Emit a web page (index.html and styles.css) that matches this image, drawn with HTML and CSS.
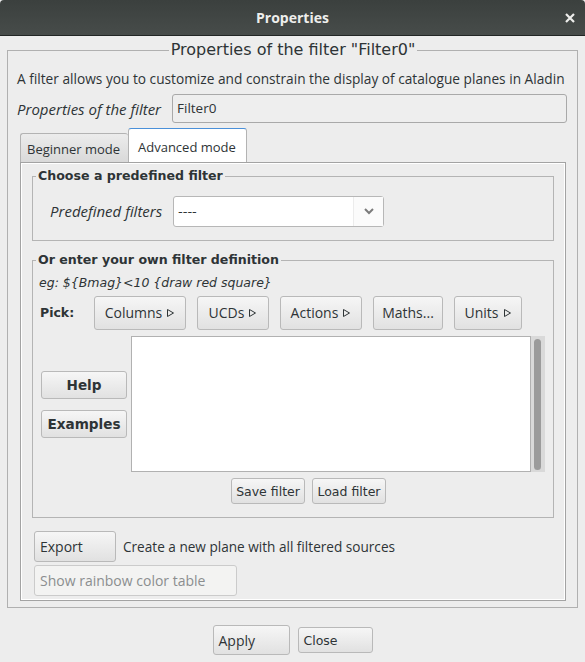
FILE: index.html
```html
<!DOCTYPE html>
<html>
<head>
<meta charset="utf-8">
<link rel="stylesheet" href="styles.css">
</head>
<body>
<div class="titlebar">
  <span class="title">Properties</span>
  <svg class="close-x" width="10" height="10" viewBox="0 0 10 10"><path d="M1 1 L9 9 M9 1 L1 9" stroke="#eeeeec" stroke-width="2.2"/></svg>
</div>
<fieldset class="outer">
  <legend class="outer-legend">Properties of the filter "Filter0"</legend>
  <div class="desc">A filter allows you to customize and constrain the display of catalogue planes in Aladin</div>
  <div class="name-row">
    <span class="ilabel name-label">Properties of the filter</span>
    <div class="textfield">Filter0</div>
  </div>
  <div class="tabs">
    <div class="tab tab-beginner">Beginner mode</div>
    <div class="tab tab-active">Advanced mode</div>
  </div>
  <div class="panel">
    <fieldset class="group group-predef">
      <legend class="group-legend">Choose a predefined filter</legend>
      <div class="predef-row">
        <span class="ilabel predef-label">Predefined filters</span>
        <div class="combo">
          <span class="combo-text">----</span>
          <span class="combo-arrow">
            <svg width="12" height="8" viewBox="0 0 12 8"><path d="M2 2 L6 6 L10 2" fill="none" stroke="#7b7b7b" stroke-width="2"/></svg>
          </span>
        </div>
      </div>
    </fieldset>
    <fieldset class="group group-own">
      <legend class="group-legend">Or enter your own filter definition</legend>
      <div class="eg">eg: ${Bmag}&lt;10 {draw red square}</div>
      <div class="pick-row">
        <span class="pick-label">Pick:</span>
        <button class="btn pick w-columns">Columns <svg class="tri" width="9" height="10" viewBox="0 0 9 10"><path d="M1.5 1.5 L7.5 5 L1.5 8.5 Z" fill="none" stroke="#2e3436" stroke-width="1"/></svg></button>
        <button class="btn pick w-ucds">UCDs <svg class="tri" width="9" height="10" viewBox="0 0 9 10"><path d="M1.5 1.5 L7.5 5 L1.5 8.5 Z" fill="none" stroke="#2e3436" stroke-width="1"/></svg></button>
        <button class="btn pick w-actions">Actions <svg class="tri" width="9" height="10" viewBox="0 0 9 10"><path d="M1.5 1.5 L7.5 5 L1.5 8.5 Z" fill="none" stroke="#2e3436" stroke-width="1"/></svg></button>
        <button class="btn pick w-maths">Maths...</button>
        <button class="btn pick w-units">Units <svg class="tri" width="9" height="10" viewBox="0 0 9 10"><path d="M1.5 1.5 L7.5 5 L1.5 8.5 Z" fill="none" stroke="#2e3436" stroke-width="1"/></svg></button>
      </div>
      <div class="editor-row">
        <div class="side-buttons">
          <button class="btn bold-btn">Help</button>
          <button class="btn bold-btn">Examples</button>
        </div>
        <div class="editor">
          <div class="editor-area"></div>
          <div class="scrollbar"><div class="thumb"></div></div>
        </div>
      </div>
      <div class="file-row">
        <button class="btn small-btn w-save">Save filter</button>
        <button class="btn small-btn w-load">Load filter</button>
      </div>
    </fieldset>
    <div class="export-row">
      <button class="btn plain-btn w-export">Export</button>
      <span class="export-text">Create a new plane with all filtered sources</span>
    </div>
    <button class="btn disabled-btn">Show rainbow color table</button>
  </div>
</fieldset>
<div class="bottom-row">
  <button class="btn plain-btn w-apply">Apply</button>
  <button class="btn small-btn w-close">Close</button>
</div>
</body>
</html>
```
FILE: styles.css
```css
* { box-sizing: border-box; }
html, body { margin: 0; padding: 0; }
body {
  width: 585px;
  height: 662px;
  background: #ededed;
  color: #2e3436;
  font-family: "Open Sans", "DejaVu Sans", sans-serif;
  font-size: 13px;
  overflow: hidden;
}
.titlebar {
  height: 36px;
  background: linear-gradient(#3b403e, #474c4a);
  border-bottom: 1px solid #222625;
  border-radius: 4px 4px 0 0;
  display: flex;
  align-items: center;
  justify-content: center;
  position: relative;
}
.title {
  color: #eeeeec;
  font-weight: bold;
  font-size: 14px;
  font-family: "Open Sans", sans-serif;
}
.close-x {
  position: absolute;
  right: 10px;
  top: 13px;
}
fieldset { margin: 0; min-width: 0; }
.outer {
  margin: 5px 7px 0;
  border: 1px solid #b0b0b0;
  padding: 0 11px 6px 12px;
}
.outer-legend {
  margin: 0 auto;
  padding: 0 2px;
  font-family: "DejaVu Sans", sans-serif;
  font-size: 16px;
  line-height: 18px;
  height: 18px;
}
.desc {
  margin: 10px 0 0 -3px;
  height: 20px;
  line-height: 20px;
  white-space: nowrap;
  font-size: 13.7px;
}
.name-row {
  margin: 5px 0 0 -3px;
  display: flex;
  align-items: center;
  height: 29px;
}
.ilabel { font-style: italic; font-size: 15px; }
.name-label { width: 155px; }
.textfield {
  flex: 1;
  height: 29px;
  border: 1px solid #a9a9a9;
  border-radius: 3px;
  background: #eeeeee;
  padding-left: 4px;
  line-height: 27px;
  margin-right: -1px;
  font-size: 13.5px;
}
.tabs {
  margin-top: 5px;
  height: 34px;
  display: flex;
  align-items: flex-end;
}
.tab {
  height: 29px;
  line-height: 31px;
  padding: 0 6px;
  border: 1px solid #b3b3b3;
  border-bottom: none;
  border-radius: 3px 3px 0 0;
}
.tab-beginner {
  width: 108px;
  background: linear-gradient(#ececec, #d9d9d9);
  border-right: none;
}
.tab-active {
  width: 119px;
  height: 34px;
  line-height: 37px;
  background: #ffffff;
  border-top: 1px solid #4a90d9;
  padding-left: 9px;
}
.panel {
  height: 439px;
  border: 1px solid #a3a3a3;
  box-shadow: inset 1px 1px 0 #ffffff, inset -1px -1px 0 #ffffff;
  padding: 5px 11px 0 11px;
}
.group {
  border: 1px solid #b4b4b4;
  padding: 0 6px 0 6px;
}
.group-legend {
  font-family: "DejaVu Sans", sans-serif;
  font-weight: bold;
  font-size: 12.6px;
  line-height: 16px;
  height: 16px;
  padding: 0 2px;
  margin-left: -3px;
}
.group-predef { height: 73px; }
.predef-row {
  margin-top: 12px;
  display: flex;
  align-items: center;
  height: 30px;
}
.predef-label { width: 134px; padding-left: 11px; }
.combo {
  width: 211px;
  height: 31px;
  background: #ffffff;
  border: 1px solid #b7b7b7;
  border-radius: 3px;
  display: flex;
}
.combo-text { flex: 1; padding-left: 4px; line-height: 29px; font-family: "DejaVu Sans", sans-serif; font-size: 13px; }
.combo-arrow {
  width: 30px;
  border-left: 1px solid #ececec;
  background: #fbfbfb;
  display: flex;
  align-items: center;
  justify-content: center;
}
.group-own {
  margin-top: 11px;
  height: 266px;
}
.eg {
  margin-top: 6px;
  height: 18px;
  line-height: 18px;
  font-family: "DejaVu Sans", sans-serif;
  font-style: italic;
  font-size: 12.5px;
}
.pick-row {
  margin-top: 4px;
  display: flex;
  align-items: center;
  gap: 11px;
  height: 33px;
}
.pick-label {
  width: 50px;
  padding-left: 1px;
  font-family: "DejaVu Sans", sans-serif;
  font-weight: bold;
  font-size: 12.5px;
  margin-right: -6px;
}
.btn {
  font-family: "Open Sans", sans-serif;
  font-size: 14px;
  color: #2e3436;
  background: linear-gradient(#f6f6f6, #e1e1e1);
  border: 1px solid #b9b9b9;
  border-radius: 3px;
  padding: 0;
  margin: 0;
  display: flex;
  align-items: center;
  justify-content: center;
  gap: 4px;
}
.pick { height: 34px; }
.tri { margin-top: 1px; }
.w-columns { width: 92px; }
.w-ucds { width: 72px; }
.w-actions { width: 82px; }
.w-maths { width: 70px; }
.w-units { width: 68px; }
.editor-row {
  margin-top: 7px;
  display: flex;
  align-items: center;
  gap: 4px;
  height: 136px;
}
.side-buttons {
  width: 86px;
  display: flex;
  flex-direction: column;
  gap: 11px;
  margin-left: 2px;
}
.bold-btn {
  height: 28px;
  font-family: "DejaVu Sans", sans-serif;
  font-weight: bold;
  font-size: 13.6px;
}
.editor {
  width: 414px;
  height: 136px;
  display: flex;
}
.editor-area {
  flex: 1;
  background: #ffffff;
  border: 1px solid #b1b1b1;
}
.scrollbar {
  width: 14px;
  background: #d9d9d9;
  padding: 3px 3px 2px 3px;
}
.thumb {
  height: 100%;
  width: 7px;
  background: #9b9b9b;
  border-radius: 4px;
}
.file-row {
  margin-top: 6px;
  display: flex;
  gap: 7px;
  padding-left: 192px;
  height: 25px;
}
.small-btn {
  height: 26px;
  font-family: "DejaVu Sans", sans-serif;
  font-size: 12.5px;
}
.w-save { width: 74px; }
.w-load { width: 74px; }
.export-row {
  margin-top: 13px;
  display: flex;
  align-items: center;
  gap: 7px;
  margin-left: 2px;
  height: 31px;
}
.plain-btn {
  height: 31px;
  font-size: 14px;
  justify-content: flex-start;
  padding-left: 5px;
}
.w-export { width: 82px; }
.export-text { font-size: 13.6px; }
.disabled-btn {
  margin-top: 3px;
  margin-left: 2px;
  width: 203px;
  height: 31px;
  background: #f3f3f2;
  border: 1px solid #cbcbcb;
  color: #8b8e8f;
  font-size: 14px;
  justify-content: flex-start;
  padding-left: 5px;
}
.bottom-row {
  margin-top: 17px;
  display: flex;
  justify-content: center;
  align-items: center;
  gap: 8px;
}
.w-apply { width: 77px; height: 30px; }
.w-close { width: 75px; height: 26px; justify-content: flex-start; padding-left: 5px; }
```
